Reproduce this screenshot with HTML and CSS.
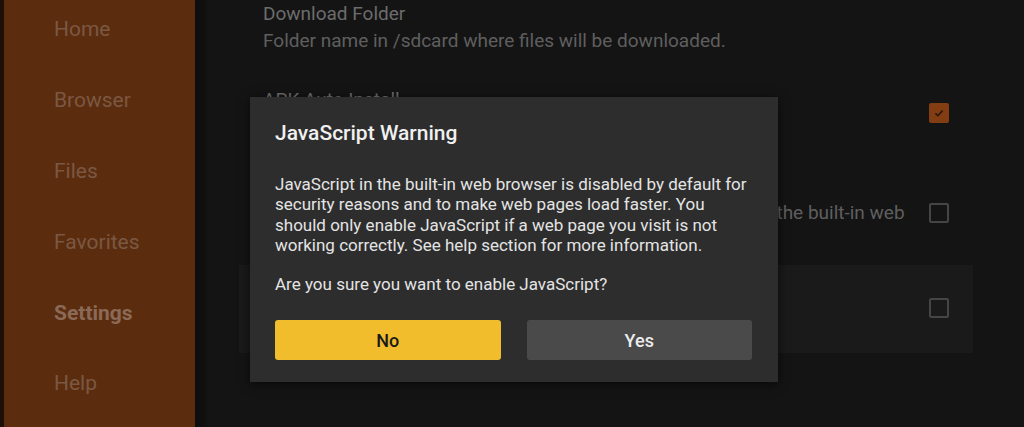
FILE: index.html
```html
<!DOCTYPE html>
<html lang="en">
<head>
<meta charset="utf-8">
<title>Settings</title>
<link rel="stylesheet" href="styles.css">
</head>
<body>
<div class="app">
  <aside class="sidebar">
    <ul class="nav">
      <li class="nav-item">Home</li>
      <li class="nav-item">Browser</li>
      <li class="nav-item">Files</li>
      <li class="nav-item">Favorites</li>
      <li class="nav-item nav-item--active">Settings</li>
      <li class="nav-item">Help</li>
    </ul>
  </aside>
  <main class="main">
    <div class="settings">
      <div class="row">
        <div class="row-text">
          <div class="row-title">Download Folder</div>
          <div class="row-sub">Folder name in /sdcard where files will be downloaded.</div>
        </div>
      </div>
      <div class="row">
        <div class="row-text">
          <div class="row-title">APK Auto Install</div>
          <div class="row-sub">Automatically open downloaded APK files.</div>
        </div>
        <span class="check check--on">
          <svg viewBox="0 0 20 20" width="20" height="20"><path d="M5.5 10.5 L8.6 13.4 L14.5 7" fill="none" stroke="#2a170a" stroke-width="2"/></svg>
        </span>
      </div>
      <div class="row row--js">
        <div class="row-text row-text--narrow">
          <div class="row-title">Enable JavaScript</div>
          <div class="row-sub">Allow webpages to run scripts. Required by sites when using the built-in web browser.</div>
        </div>
        <span class="check"></span>
      </div>
      <div class="row row--focused">
        <div class="row-text">
          <div class="row-title">Clear Browser Data</div>
          <div class="row-sub">Remove cookies and cached files.</div>
        </div>
        <span class="check"></span>
      </div>
    </div>
  </main>
  <div class="dialog" role="dialog">
    <h2 class="dialog-title">JavaScript Warning</h2>
    <p class="dialog-text">JavaScript in the built-in web browser is disabled by default for security reasons and to make web pages load faster. You should only enable JavaScript if a web page you visit is not working correctly. See help section for more information.</p>
    <p class="dialog-text dialog-question">Are you sure you want to enable JavaScript?</p>
    <div class="dialog-actions">
      <button class="btn btn--primary">No</button>
      <button class="btn btn--secondary">Yes</button>
    </div>
  </div>
</div>
</body>
</html>
```
FILE: styles.css
```css
* { box-sizing: border-box; }
html, body {
  margin: 0;
  padding: 0;
  width: 1024px;
  height: 427px;
  overflow: hidden;
  background: #141414;
  font-family: Roboto, "Noto Sans", "Liberation Sans", sans-serif;
}
.app {
  position: relative;
  display: flex;
  width: 1024px;
  height: 427px;
}
.sidebar {
  width: 195px;
  flex: none;
  background: #5c2c0e;
  border-left: 4px solid #1e1008;
}
.nav {
  list-style: none;
  margin: -6px 0 0;
  padding: 0 0 0 50px;
}
.nav-item {
  height: 70.8px;
  display: flex;
  align-items: center;
  font-size: 21px;
  color: #7a5843;
}
.nav-item--active {
  font-weight: 700;
  color: #8a6a56;
}
.main {
  flex: 1;
  background: linear-gradient(to right, #0d0d0e 0, #0f0f10 8px, #141414 14px);
  padding: 0 51px 0 68px;
  overflow: hidden;
}
.settings {
  margin-top: -16px;
}
.row {
  display: flex;
  align-items: center;
  padding: 16px 0;
}
.row--js {
  padding-bottom: 12px;
}
.row--focused {
  background: #1a1a1a;
  margin-left: -24px;
  padding: 16px 0 18px 24px;
}
.row-text {
  flex: 1;
  min-width: 0;
  font-size: 19px;
  line-height: 27px;
}
.row-text--narrow {
  margin-right: 18px;
}
.row-title { color: #6c6c6c; }
.row-sub { color: #5f5f5f; }
.check {
  flex: none;
  width: 20px;
  height: 20px;
  margin-right: 24px;
  border: 2px solid #454545;
  border-radius: 2px;
  display: flex;
  align-items: center;
  justify-content: center;
}
.check svg { display: block; }
.check--on {
  background: #823d12;
  border-color: #823d12;
}
.dialog {
  position: absolute;
  left: 250px;
  top: 97px;
  width: 528px;
  height: 285px;
  background: #2d2d2d;
  box-shadow: 0 2px 10px rgba(0, 0, 0, 0.6);
  padding: 24px 26px 21px 25px;
}
.dialog-title {
  margin: 0;
  font-size: 21px;
  line-height: 24px;
  font-weight: 500;
  color: #f0f0f0;
}
.dialog-text {
  margin: 29px 0 0;
  font-size: 17px;
  line-height: 20.3px;
  color: #e4e4e4;
}
.dialog-question {
  margin-top: 19px;
}
.dialog-actions {
  display: flex;
  gap: 26px;
  margin-top: 26px;
}
.btn {
  flex: 1;
  height: 40px;
  border: 0;
  border-radius: 3px;
  font-family: inherit;
  font-size: 18px;
  font-weight: 500;
}
.btn--primary {
  background: #f1bd2d;
  color: #1a1a1a;
}
.btn--secondary {
  background: #4a4a4a;
  color: #ececec;
}
```
